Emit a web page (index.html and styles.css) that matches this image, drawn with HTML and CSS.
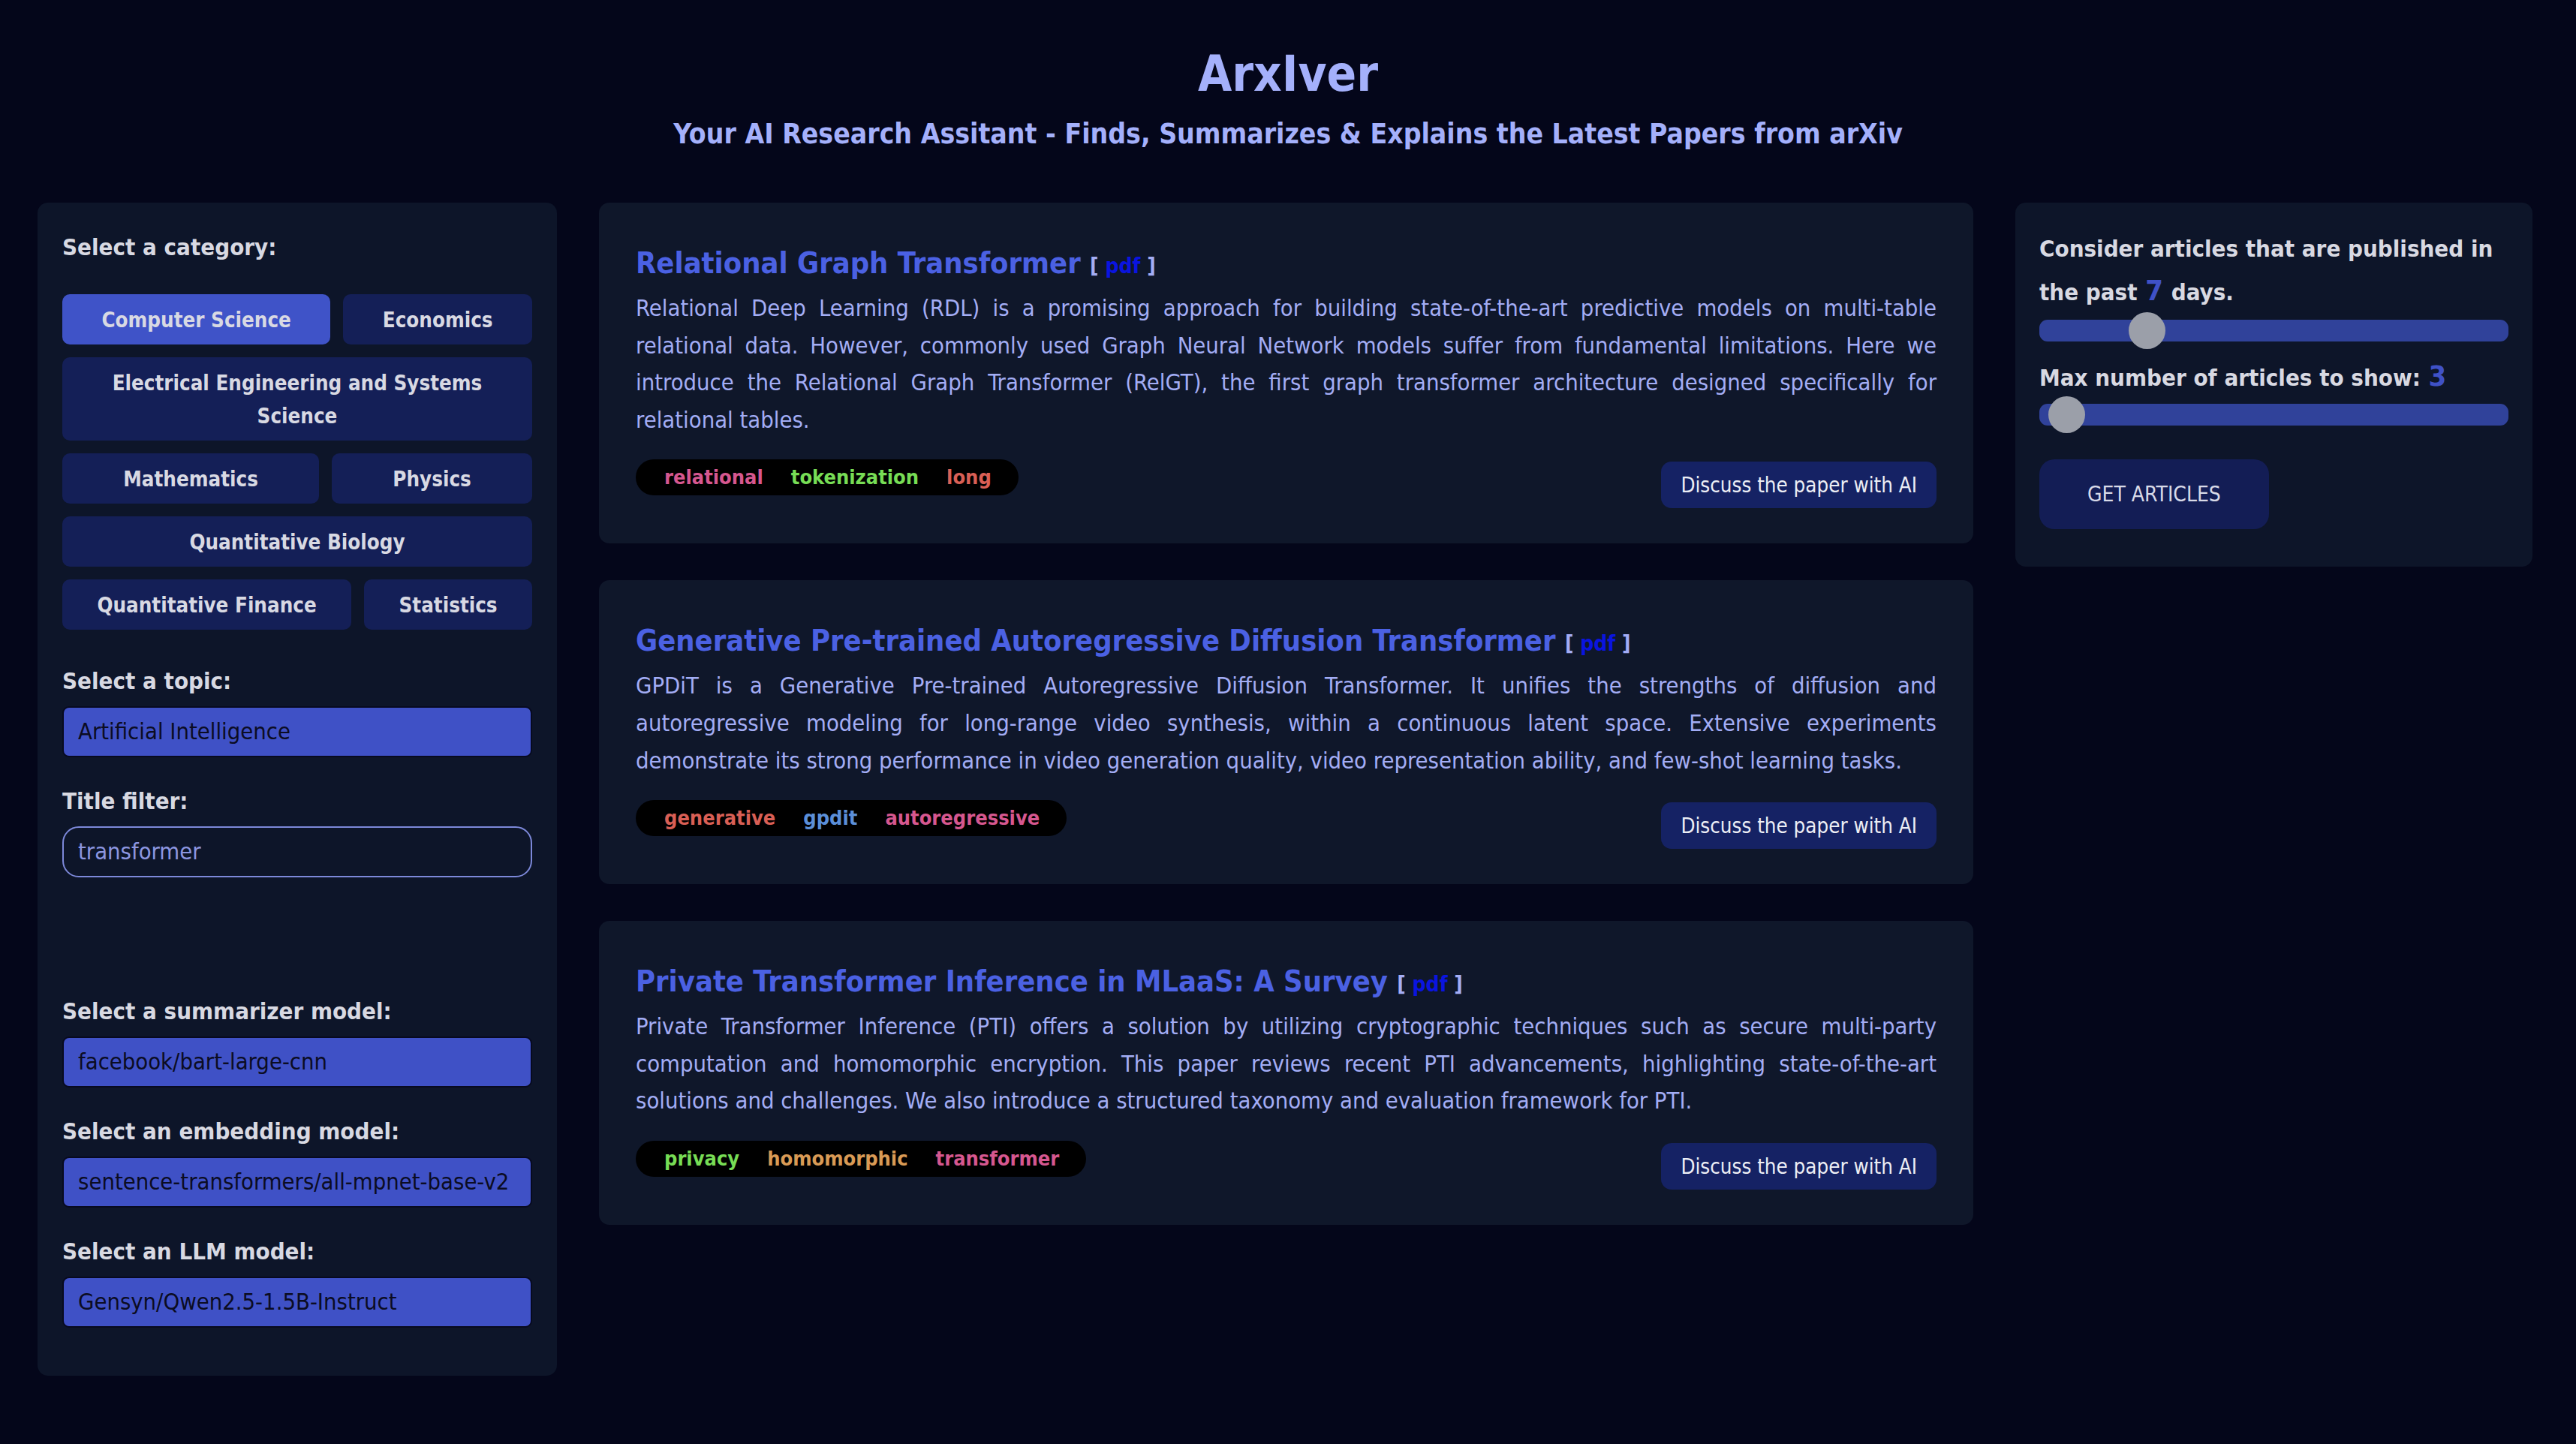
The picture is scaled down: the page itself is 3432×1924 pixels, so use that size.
FILE: index.html
```html
<!DOCTYPE html>
<html lang="en">
<head>
<meta charset="utf-8">
<title>ArxIver</title>
<link rel="stylesheet" href="styles.css">
</head>
<body>
<header class="hero">
  <h1 class="brand">ArxIver</h1>
  <p class="tagline">Your AI Research Assitant - Finds, Summarizes &amp; Explains the Latest Papers from arXiv</p>
</header>

<main class="layout">
  <aside class="sidebar">
    <h3 class="field-label first">Select a category:</h3>
    <div class="categories">
      <button class="cat active">Computer Science</button>
      <button class="cat">Economics</button>
      <button class="cat">Electrical Engineering and Systems Science</button>
      <button class="cat">Mathematics</button>
      <button class="cat">Physics</button>
      <button class="cat">Quantitative Biology</button>
      <button class="cat">Quantitative Finance</button>
      <button class="cat">Statistics</button>
    </div>

    <h3 class="field-label after-cats">Select a topic:</h3>
    <div class="select">Artificial Intelligence</div>

    <h3 class="field-label">Title filter:</h3>
    <div class="text-input">transformer</div>

    <h3 class="field-label spaced">Select a summarizer model:</h3>
    <div class="select">facebook/bart-large-cnn</div>

    <h3 class="field-label">Select an embedding model:</h3>
    <div class="select">sentence-transformers/all-mpnet-base-v2</div>

    <h3 class="field-label">Select an LLM model:</h3>
    <div class="select">Gensyn/Qwen2.5-1.5B-Instruct</div>
  </aside>

  <section class="feed">
    <article class="paper">
      <h2 class="paper-title">Relational Graph Transformer <span class="pdf">[ <a href="#">pdf</a> ]</span></h2>
      <p class="abstract">Relational Deep Learning (RDL) is a promising approach for building state-of-the-art predictive models on multi-table relational data. However, commonly used Graph Neural Network models suffer from fundamental limitations. Here we introduce the Relational Graph Transformer (RelGT), the first graph transformer architecture designed specifically for relational tables.</p>
      <div class="paper-footer">
        <div class="tags">
          <span class="tag pink">relational</span>
          <span class="tag green">tokenization</span>
          <span class="tag coral">long</span>
        </div>
        <button class="discuss">Discuss the paper with AI</button>
      </div>
    </article>

    <article class="paper">
      <h2 class="paper-title">Generative Pre-trained Autoregressive Diffusion Transformer <span class="pdf">[ <a href="#">pdf</a> ]</span></h2>
      <p class="abstract">GPDiT is a Generative Pre-trained Autoregressive Diffusion Transformer. It unifies the strengths of diffusion and autoregressive modeling for long-range video synthesis, within a continuous latent space. Extensive experiments demonstrate its strong performance in video generation quality, video representation ability, and few-shot learning tasks.</p>
      <div class="paper-footer">
        <div class="tags">
          <span class="tag coral">generative</span>
          <span class="tag blue">gpdit</span>
          <span class="tag pink">autoregressive</span>
        </div>
        <button class="discuss">Discuss the paper with AI</button>
      </div>
    </article>

    <article class="paper">
      <h2 class="paper-title">Private Transformer Inference in MLaaS: A Survey <span class="pdf">[ <a href="#">pdf</a> ]</span></h2>
      <p class="abstract">Private Transformer Inference (PTI) offers a solution by utilizing cryptographic techniques such as secure multi-party computation and homomorphic encryption. This paper reviews recent PTI advancements, highlighting state-of-the-art solutions and challenges. We also introduce a structured taxonomy and evaluation framework for PTI.</p>
      <div class="paper-footer">
        <div class="tags">
          <span class="tag green">privacy</span>
          <span class="tag orange">homomorphic</span>
          <span class="tag pink">transformer</span>
        </div>
        <button class="discuss">Discuss the paper with AI</button>
      </div>
    </article>
  </section>

  <aside class="controls">
    <p class="control-label days">Consider articles that are published in the past <span class="num">7</span> days.</p>
    <div class="slider"><div class="track"></div><span class="thumb" style="--pos:0.207"></span></div>
    <p class="control-label max">Max number of articles to show: <span class="num">3</span></p>
    <div class="slider"><div class="track"></div><span class="thumb" style="--pos:0.0217"></span></div>
    <button class="get">GET ARTICLES</button>
  </aside>
</main>
</body>
</html>
```

FILE: styles.css
```css
* { box-sizing: border-box; }

html, body {
  margin: 0;
  background: #04061a;
}

body {
  font-family: "DejaVu Sans Condensed", "DejaVu Sans", sans-serif;
  font-stretch: condensed;
  color: #d8d9e2;
}

button {
  font-family: inherit;
  font-stretch: inherit;
  border: none;
  cursor: pointer;
}

/* ---------- header ---------- */
.hero {
  height: 270px;
  padding-top: 61px;
  text-align: center;
}

.brand {
  margin: 0;
  font-size: 65px;
  line-height: 76px;
  font-weight: 700;
  color: #a4b0fb;
}

.tagline {
  margin: 20px 0 0;
  font-size: 37px;
  line-height: 44px;
  font-weight: 700;
  color: #a4b0fb;
}

/* ---------- layout ---------- */
.layout {
  display: grid;
  grid-template-columns: 692px 1fr 689px;
  column-gap: 56px;
  align-items: start;
  padding: 0 58px 60px 50px;
}

/* ---------- sidebar ---------- */
.sidebar {
  background: #0d1529;
  border-radius: 14px;
  padding: 41px 33px 64px;
}

.field-label {
  margin: 40px 0 16px;
  font-size: 31px;
  line-height: 36px;
  font-weight: 700;
  color: #d8d9e2;
}

.field-label.first { margin-top: 0; margin-bottom: 45px; }
.field-label.after-cats { margin-top: 50px; }
.field-label.spaced { margin-top: 160px; }

.categories {
  display: flex;
  flex-wrap: wrap;
  gap: 17px;
}

.cat {
  flex: 1 1 auto;
  padding: 11.5px 44px;
  border-radius: 10px;
  background: #141f57;
  color: #d8d9e3;
  font-size: 27.5px;
  line-height: 44px;
  font-weight: 700;
  text-align: center;
}

.cat.active {
  background: #3f53c8;
}

.select {
  height: 68px;
  padding: 0 19px;
  border: 2px solid #070a20;
  border-radius: 9px;
  background: #3f51c6;
  color: #0b0c22;
  font-size: 30.7px;
  line-height: 64px;
  white-space: nowrap;
  overflow: hidden;
}

.text-input {
  height: 68px;
  padding: 0 19px;
  border: 2px solid #7c88d9;
  border-radius: 22px;
  color: #8c96e0;
  font-size: 30.7px;
  line-height: 64px;
}

/* ---------- feed ---------- */
.feed {
  display: flex;
  flex-direction: column;
  gap: 49px;
}

.paper {
  background: #0f172a;
  border-radius: 14px;
  padding: 49px 49px 47px;
}

.paper-title {
  margin: 0;
  font-size: 39.5px;
  line-height: 62px;
  font-weight: 700;
  color: #4b61e3;
}

.pdf {
  font-size: 28px;
  color: #a3adf5;
}

.pdf a {
  color: #0a14e0;
  text-decoration: none;
}

.abstract {
  margin: 0;
  font-size: 30.7px;
  line-height: 49.6px;
  color: #a3adf5;
  text-align: justify;
}

.paper-footer {
  display: flex;
  justify-content: space-between;
  align-items: flex-start;
  margin-top: 28px;
}

.tags {
  display: inline-flex;
  align-items: center;
  gap: 37px;
  height: 48px;
  padding: 0 36px 0 38px;
  border-radius: 24px;
  background: #000;
}

.tag {
  font-size: 27px;
  line-height: 48px;
  font-weight: 700;
}

.tag.pink { color: #d6578f; }
.tag.green { color: #77dd55; }
.tag.coral { color: #d95f55; }
.tag.blue { color: #5b8fd9; }
.tag.orange { color: #d99a55; }

.discuss {
  margin-top: 3px;
  padding: 15px 26px;
  border-radius: 14px;
  background: #152264;
  color: #eceef5;
  font-size: 27.5px;
  line-height: 32px;
}

/* ---------- controls ---------- */
.controls {
  background: #0d1529;
  border-radius: 14px;
  padding: 32px 32px 50px;
}

.control-label {
  margin: 0;
  font-size: 31px;
  font-weight: 700;
  color: #d8d9e2;
}

.control-label.days { line-height: 58px; }
.control-label.max { line-height: 50px; margin-top: 13px; }

.num {
  font-size: 38px;
  line-height: 1;
  margin: 0 1px;
  color: #3f51c6;
}

.slider {
  position: relative;
  height: 49px;
}

.controls .slider:first-of-type { margin-top: -2px; }

.track {
  position: absolute;
  left: 0;
  right: 0;
  top: 10px;
  height: 29px;
  border-radius: 11px;
  background: #30429a;
}

.thumb {
  position: absolute;
  top: 0;
  left: calc(var(--pos) * (100% - 49px));
  width: 49px;
  height: 49px;
  border-radius: 50%;
  background: #9b9fa9;
}

.get {
  display: block;
  margin-top: 35px;
  padding: 30px 64px;
  border-radius: 20px;
  background: #131d55;
  color: #d8dae8;
  font-size: 28px;
  line-height: 33px;
}
```
